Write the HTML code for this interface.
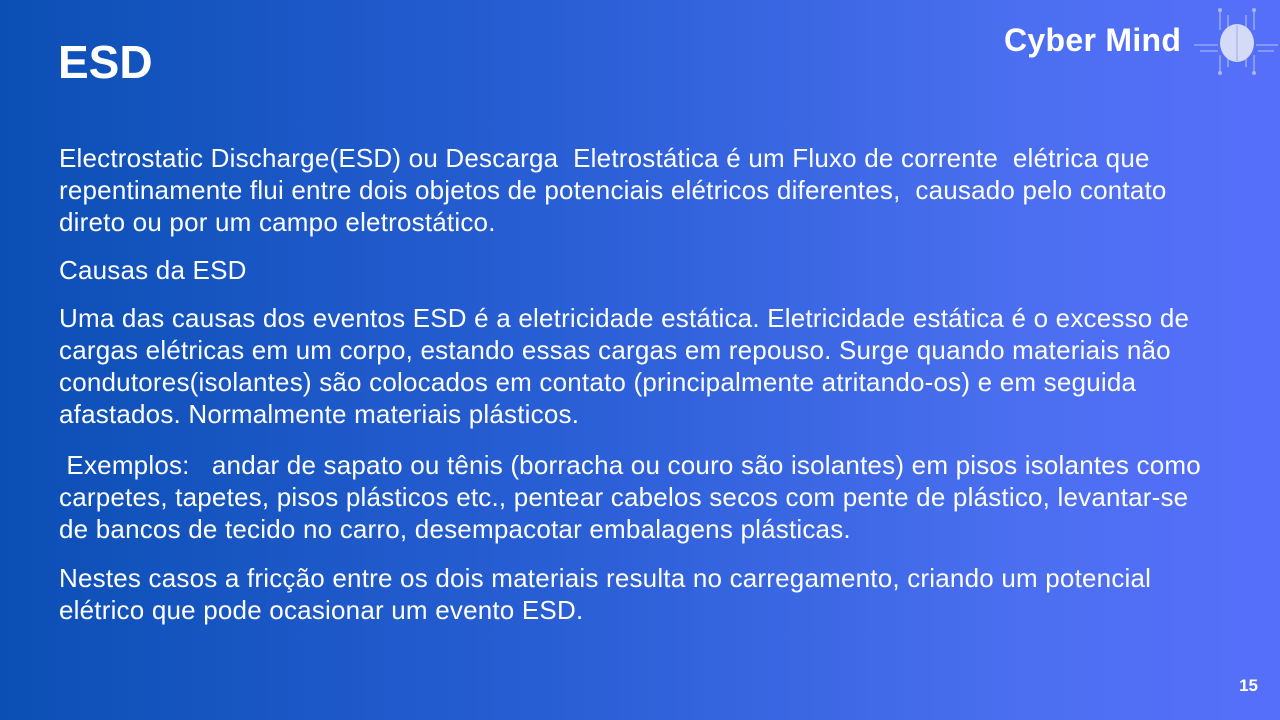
<!DOCTYPE html>
<html><head><meta charset="utf-8"><style>
html,body{margin:0;padding:0}
body{width:1280px;height:720px;overflow:hidden;position:relative;
background:linear-gradient(90deg,#0b4fb4 0%,#2a5fd6 45%,#4b6ff0 80%,#566ffa 100%);
font-family:"Liberation Sans",sans-serif;color:#fff}
h1{position:absolute;left:58px;top:35px;margin:0;font-size:46px;font-weight:bold}
.t{position:absolute;left:59px;top:142px;width:1200px;font-size:26px;letter-spacing:0.2px;line-height:32px;white-space:nowrap}
.t p{margin:0 0 16px 0}
.n{position:absolute;right:22px;top:676px;font-size:17px;font-weight:bold}
.logo{position:absolute;left:1004px;top:22px;font-size:32px;font-weight:bold;letter-spacing:0.3px}
</style></head><body>
<h1>ESD</h1>
<div class="logo">Cyber Mind</div>
<svg style="position:absolute;left:1192px;top:5px" width="88" height="70" viewBox="0 0 88 70">
<g stroke="#b8c4f0" stroke-width="1.3" fill="none" opacity="0.8">
<path d="M28 5v20M36 10v15M54 10v15M62 5v20M2 40h24M8 46h18M64 40h22M66 46h16M28 50v18M36 50v12M54 50v12M62 50v18"/>
</g>
<g fill="#b8c4f0" opacity="0.8"><circle cx="28" cy="5" r="2"/><circle cx="62" cy="5" r="2"/><circle cx="28" cy="68" r="2"/><circle cx="62" cy="68" r="2"/></g>
<ellipse cx="45" cy="38" rx="17" ry="19" fill="#d4dbf7"/>
<path d="M45 20v36" stroke="#b0bbe8" stroke-width="1.5"/>
</svg>
<div class="t">
<p>Electrostatic Discharge(ESD) ou Descarga&nbsp; Eletrostática é um Fluxo de corrente&nbsp; elétrica que<br>repentinamente flui entre dois objetos de potenciais elétricos diferentes,&nbsp; causado pelo contato<br>direto ou por um campo eletrostático.</p>
<p>Causas da ESD</p>
<p>Uma das causas dos eventos ESD é a eletricidade estática. Eletricidade estática é o excesso de<br>cargas elétricas em um corpo, estando essas cargas em repouso. Surge quando materiais não<br>condutores(isolantes) são colocados em contato (principalmente atritando-os) e em seguida<br>afastados. Normalmente materiais plásticos.</p>
<p style="margin-top:19px">&nbsp;Exemplos:&nbsp;&nbsp; andar de sapato ou tênis (borracha ou couro são isolantes) em pisos isolantes como<br>carpetes, tapetes, pisos plásticos etc., pentear cabelos secos com pente de plástico, levantar-se<br>de bancos de tecido no carro, desempacotar embalagens plásticas.</p>
<p style="margin-top:17px">Nestes casos a fricção entre os dois materiais resulta no carregamento, criando um potencial<br>elétrico que pode ocasionar um evento ESD.</p>
</div>
<div class="n">15</div>
</body></html>
